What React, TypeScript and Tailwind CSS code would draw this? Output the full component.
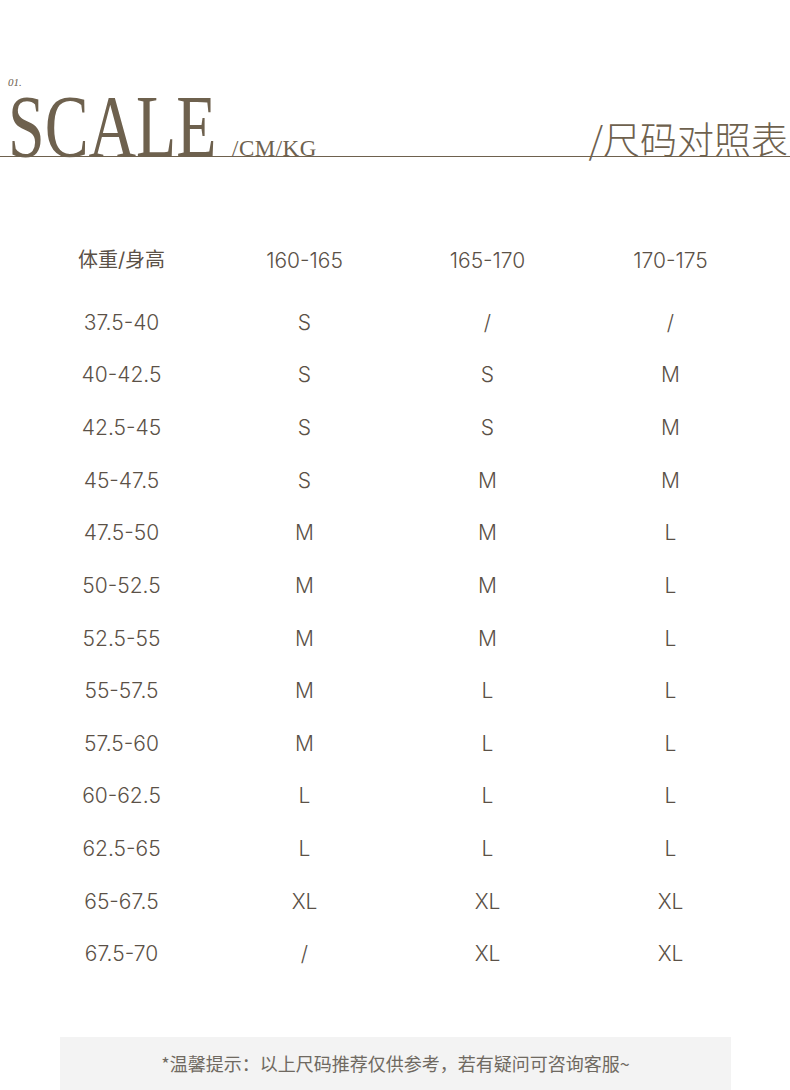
const rows: [string, string, string, string][] = [
  ["37.5-40", "S", "/", "/"],
  ["40-42.5", "S", "S", "M"],
  ["42.5-45", "S", "S", "M"],
  ["45-47.5", "S", "M", "M"],
  ["47.5-50", "M", "M", "L"],
  ["50-52.5", "M", "M", "L"],
  ["52.5-55", "M", "M", "L"],
  ["55-57.5", "M", "L", "L"],
  ["57.5-60", "M", "L", "L"],
  ["60-62.5", "L", "L", "L"],
  ["62.5-65", "L", "L", "L"],
  ["65-67.5", "XL", "XL", "XL"],
  ["67.5-70", "/", "XL", "XL"],
];

const serif = "font-['Liberation_Serif',serif]";
const cjk = "font-['Inter','Noto_Sans_CJK_SC',sans-serif]";

export default function App() {
  return (
    <div className="w-[790px] h-[1090px] bg-white overflow-hidden text-[#5b5147]">
      {/* Header */}
      <div className="h-[157px] border-b border-[#6e614e] flex items-end justify-between pl-[8px] pr-[2px] text-[#6e614e]">
        <div className="flex items-end">
          <div className="flex flex-col w-[207px]">
            <span className={`mb-[8px] text-[11px] italic leading-none ${serif}`}>01.</span>
            <span
              className={`block h-[60px] origin-bottom-left scale-x-[0.74] whitespace-nowrap text-[89px] leading-[60px] ${serif}`}
            >
              SCALE
            </span>
          </div>
          <span className={`ml-[17px] mb-[-4px] text-[23px] leading-none tracking-[0.5px] ${serif}`}>/CM/KG</span>
        </div>
        <span className="mb-[-1px] text-[37px] font-light leading-none font-['Noto_Sans_CJK_SC',sans-serif]">
          /尺码对照表
        </span>
      </div>

      {/* Table */}
      <div className={`mt-[77px] ml-[30px] ${cjk} font-light text-[21px]`}>
        <div className="grid grid-cols-[repeat(4,183px)] h-[52.67px] items-center text-center mb-[9.33px]">
          <span className="font-normal text-[20px]">体重/身高</span>
          <span>160-165</span>
          <span>165-170</span>
          <span>170-175</span>
        </div>
        {rows.map((r) => (
          <div key={r[0]} className="grid grid-cols-[repeat(4,183px)] h-[52.67px] items-center text-center">
            {r.map((c, i) => (
              <span key={i}>{c}</span>
            ))}
          </div>
        ))}
      </div>

      {/* Note */}
      <div className="mt-[56px] ml-[60px] w-[671px] h-[54px] bg-[#f3f3f3] flex items-center justify-center text-[18px] text-[#6f6961] font-['Noto_Sans_CJK_SC',sans-serif]">
        *温馨提示：以上尺码推荐仅供参考，若有疑问可咨询客服~
      </div>
    </div>
  );
}
